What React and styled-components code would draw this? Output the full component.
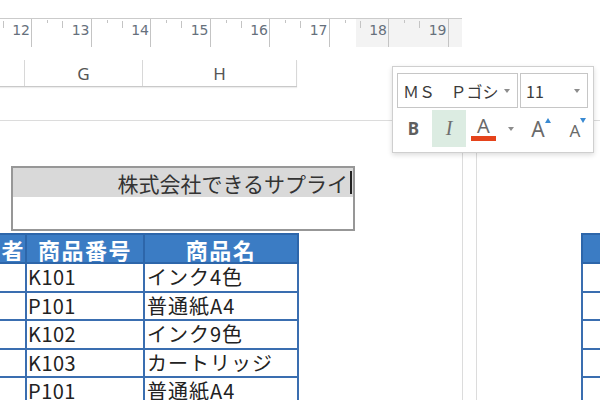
import React from 'react';
import styled, { createGlobalStyle } from 'styled-components';

const GlobalStyle = createGlobalStyle`
  html, body { margin: 0; padding: 0; background: #fff; overflow: hidden; }
  body { font-family: "Noto Sans", "Noto Sans CJK JP", sans-serif; }
  * { box-sizing: border-box; }
`;

const Screen = styled.div`
  position: relative;
  width: 600px;
  height: 400px;
  overflow: hidden;
  background: #fff;
  display: flex;
  flex-direction: column;
`;

/* ---------- ruler ---------- */
const Ruler = styled.div`
  margin-top: 18px;
  width: 462px;
  height: 29px;
  flex: 0 0 29px;
  border-top: 1px solid #cbcbcb;
  background: linear-gradient(to right, #fff 356px, #f3f3f3 356px);
  display: flex;
  overflow: hidden;
`;

const RulerUnit = styled.div`
  position: relative;
  flex: 0 0 59.5px;
  height: 100%;
  margin-left: ${(p) => (p.$first ? '-27.5px' : '0')};
  border-right: 1px solid #c4c4c4;
  display: flex;
  justify-content: flex-end;
  align-items: flex-start;
  padding: 4px 1px 0 0;
  &::before {
    content: '';
    position: absolute;
    left: 15px;
    top: 1px;
    width: 1px;
    height: 3px;
    background: #c4c4c4;
  }
  &::after {
    content: '';
    position: absolute;
    left: 30px;
    top: 2px;
    width: 1px;
    height: 7px;
    background: #c4c4c4;
  }
`;

const RulerLabel = styled.span`
  font-family: "DejaVu Sans", sans-serif;
  font-size: 14px;
  line-height: 14px;
  color: #66707c;
`;

/* ---------- column header ---------- */
const ColumnHeader = styled.div`
  margin-top: 13px;
  width: 297px;
  height: 27px;
  flex: 0 0 27px;
  display: flex;
  border-bottom: 1px solid #c9c9c9;
  box-shadow: 0 1px 1px rgba(0, 0, 0, 0.07);
`;

const ColumnCell = styled.div`
  flex: 0 0 ${(p) => p.$w}px;
  border-right: 1px solid #d8d8d8;
  display: flex;
  align-items: center;
  justify-content: center;
  font-family: "Noto Sans", sans-serif;
  font-size: 17px;
  color: #555;
`;

/* ---------- pages ---------- */
const Pages = styled.div`
  margin-top: 33px;
  flex: 1;
  display: flex;
  align-items: stretch;
`;

const Page = styled.div`
  flex: 0 0 ${(p) => p.$w}px;
  margin-left: ${(p) => p.$ml || 0}px;
  border-top: 1px solid #dcdcdc;
  border-left: ${(p) => (p.$left ? '1px solid #dcdcdc' : 'none')};
  border-right: ${(p) => (p.$right ? '1px solid #dcdcdc' : 'none')};
  overflow: hidden;
  display: flex;
  flex-direction: column;
  align-items: flex-start;
`;

const TitleBox = styled.div`
  margin: 45px 0 0 11px;
  width: 344px;
  height: 65px;
  flex: 0 0 65px;
  border: 2px solid #979797;
  background: #fff;
  visibility: ${(p) => (p.$ghost ? 'hidden' : 'visible')};
`;

const TitleBand = styled.div`
  height: 29px;
  background: #d9d9d9;
  display: flex;
  justify-content: flex-end;
  align-items: center;
  padding-right: 1px;
  font-family: "Noto Sans CJK JP", sans-serif;
  font-size: 21px;
  color: #333;
`;

const Caret = styled.span`
  display: inline-block;
  width: 2px;
  height: 23px;
  margin-left: 2px;
  background: #222;
`;

const Sheet = styled.table`
  margin-top: 2px;
  margin-left: ${(p) => p.$ml || 0}px;
  width: ${(p) => p.$w}px;
  flex: 0 0 auto;
  border-collapse: collapse;
  table-layout: fixed;
  font-family: "Noto Sans CJK JP", sans-serif;
`;

const HeadCell = styled.th`
  height: 29px;
  padding: 0;
  background: #3b7cc4;
  border: 2px solid #2d66aa;
  color: #fff;
  font-size: 22px;
  line-height: 24px;
  letter-spacing: 1.5px;
  font-weight: 700;
  text-align: center;
  white-space: nowrap;
  overflow: hidden;
`;

const ClipRight = styled.div`
  display: flex;
  justify-content: flex-end;
  overflow: hidden;
  padding-right: 0;
`;

const BodyCell = styled.td`
  height: 28.5px;
  padding: 0 0 0 ${(p) => (p.$wide ? 2 : 1)}px;
  border: 2px solid #3a6eb0;
  background: #fff;
  font-size: 20px;
  line-height: 22px;
  letter-spacing: ${(p) => (p.$wide ? '1px' : '0.5px')};
  color: #222;
  white-space: nowrap;
  overflow: hidden;
`;

/* ---------- mini toolbar ---------- */
const MiniToolbar = styled.div`
  position: absolute;
  left: 392px;
  top: 66px;
  width: 202px;
  height: 87px;
  background: #fff;
  border: 1px solid #cfcfcf;
  box-shadow: 0 2px 5px rgba(0, 0, 0, 0.14);
  padding: 6px 5px 0 4px;
  display: flex;
  flex-direction: column;
  gap: 2px;
`;

const ToolRow = styled.div`
  display: flex;
  height: ${(p) => p.$h}px;
  gap: 2px;
`;

const Select = styled.div`
  flex: 0 0 ${(p) => p.$w}px;
  min-width: 0;
  border: 1px solid #c6c6c6;
  display: flex;
  align-items: center;
  padding: 0 7px 0 5px;
`;

const SelectText = styled.span`
  flex: 1 1 0;
  min-width: 0;
  overflow: hidden;
  white-space: nowrap;
  font-family: "Noto Sans CJK JP", sans-serif;
  font-size: 16px;
  word-spacing: 12px;
  color: #3a3a3a;
`;

const DropArrow = styled.span`
  flex: 0 0 auto;
  width: 0;
  height: 0;
  margin-left: ${(p) => p.$ml || 0}px;
  border-left: 3.5px solid transparent;
  border-right: 3.5px solid transparent;
  border-top: 4px solid #8c8c8c;
`;

const ToolButton = styled.div`
  flex: 0 0 ${(p) => p.$w}px;
  display: flex;
  align-items: center;
  justify-content: ${(p) => p.$justify || 'center'};
  padding-left: ${(p) => p.$pl || 0}px;
  background: ${(p) => (p.$active ? '#dcece2' : 'transparent')};
  color: #666;
`;

const BoldGlyph = styled.span`
  font-family: "Noto Sans", sans-serif;
  font-weight: 700;
  font-size: 17px;
  color: #5f5f5f;
`;

const ItalicGlyph = styled.span`
  font-family: "Liberation Serif", serif;
  font-style: italic;
  font-size: 20px;
  color: #6f6f6f;
`;

const ColorA = styled.span`
  flex: 0 0 25px;
  display: flex;
  flex-direction: column;
  align-items: center;
  font-family: "Noto Sans", sans-serif;
  font-size: 20px;
  line-height: 20px;
  color: #6a6a6a;
  &::after {
    content: '';
    display: block;
    width: 25px;
    height: 5px;
    background: #e5431b;
  }
`;

const SizeA = styled.span`
  font-family: "Noto Sans", sans-serif;
  font-size: ${(p) => p.$size}px;
  line-height: 1;
  color: #6a6a6a;
  margin-top: ${(p) => p.$mt || 0}px;
`;

const Tri = styled.span`
  align-self: flex-start;
  margin-top: 8px;
  width: 0;
  height: 0;
  border-left: 3.5px solid transparent;
  border-right: 3.5px solid transparent;
  ${(p) =>
    p.$up
      ? 'border-bottom: 5px solid #3a8ad2;'
      : 'border-top: 5px solid #3a8ad2;'}
`;

const rulerNums = [12, 13, 14, 15, 16, 17, 18, 19];

const rows = [
  ['K101', 'インク4色'],
  ['P101', '普通紙A4'],
  ['K102', 'インク9色'],
  ['K103', 'カートリッジ'],
  ['P101', '普通紙A4'],
  ['K101', 'インク4色'],
];

export default function App() {
  return (
    <>
      <GlobalStyle />
      <Screen>
        <Ruler>
          {rulerNums.map((n, i) => (
            <RulerUnit key={n} $first={i === 0}>
              <RulerLabel>{n}</RulerLabel>
            </RulerUnit>
          ))}
        </Ruler>

        <ColumnHeader>
          <ColumnCell $w={25} />
          <ColumnCell $w={118}>G</ColumnCell>
          <ColumnCell $w={154}>H</ColumnCell>
        </ColumnHeader>

        <Pages>
          <Page $w={463} $right>
            <TitleBox>
              <TitleBand>
                株式会社できるサプライ
                <Caret />
              </TitleBand>
            </TitleBox>
            <Sheet $ml={-3} $w={300}>
              <colgroup>
                <col style={{ width: 28 }} />
                <col style={{ width: 118 }} />
                <col style={{ width: 154 }} />
              </colgroup>
              <thead>
                <tr>
                  <HeadCell>
                    <ClipRight>担当者</ClipRight>
                  </HeadCell>
                  <HeadCell>商品番号</HeadCell>
                  <HeadCell>商品名</HeadCell>
                </tr>
              </thead>
              <tbody>
                {rows.map(([code, name], i) => (
                  <tr key={i}>
                    <BodyCell />
                    <BodyCell>{code}</BodyCell>
                    <BodyCell $wide>{name}</BodyCell>
                  </tr>
                ))}
              </tbody>
            </Sheet>
          </Page>

          <Page $w={130} $ml={13} $left>
            <TitleBox $ghost />
            <Sheet $ml={104} $w={228}>
              <colgroup>
                <col style={{ width: 110 }} />
                <col style={{ width: 118 }} />
              </colgroup>
              <thead>
                <tr>
                  <HeadCell>担当者</HeadCell>
                  <HeadCell>商品番号</HeadCell>
                </tr>
              </thead>
              <tbody>
                {rows.map((r, i) => (
                  <tr key={i}>
                    <BodyCell />
                    <BodyCell />
                  </tr>
                ))}
              </tbody>
            </Sheet>
          </Page>
        </Pages>

        <MiniToolbar>
          <ToolRow $h={35}>
            <Select $w={121}>
              <SelectText>ＭＳ Ｐゴシック</SelectText>
              <DropArrow $ml={6} />
            </Select>
            <Select $w={68}>
              <SelectText>11</SelectText>
              <DropArrow />
            </Select>
          </ToolRow>
          <ToolRow $h={37}>
            <ToolButton $w={33}>
              <BoldGlyph>B</BoldGlyph>
            </ToolButton>
            <ToolButton $w={34} $active>
              <ItalicGlyph>I</ItalicGlyph>
            </ToolButton>
            <ToolButton $w={54} $justify="flex-start" $pl={3}>
              <ColorA>A</ColorA>
              <DropArrow $ml={12} />
            </ToolButton>
            <ToolButton $w={34}>
              <SizeA $size={21} $mt={2}>A</SizeA>
              <Tri $up />
            </ToolButton>
            <ToolButton $w={32} $pl={4}>
              <SizeA $size={17} $mt={4}>A</SizeA>
              <Tri />
            </ToolButton>
          </ToolRow>
        </MiniToolbar>
      </Screen>
    </>
  );
}
